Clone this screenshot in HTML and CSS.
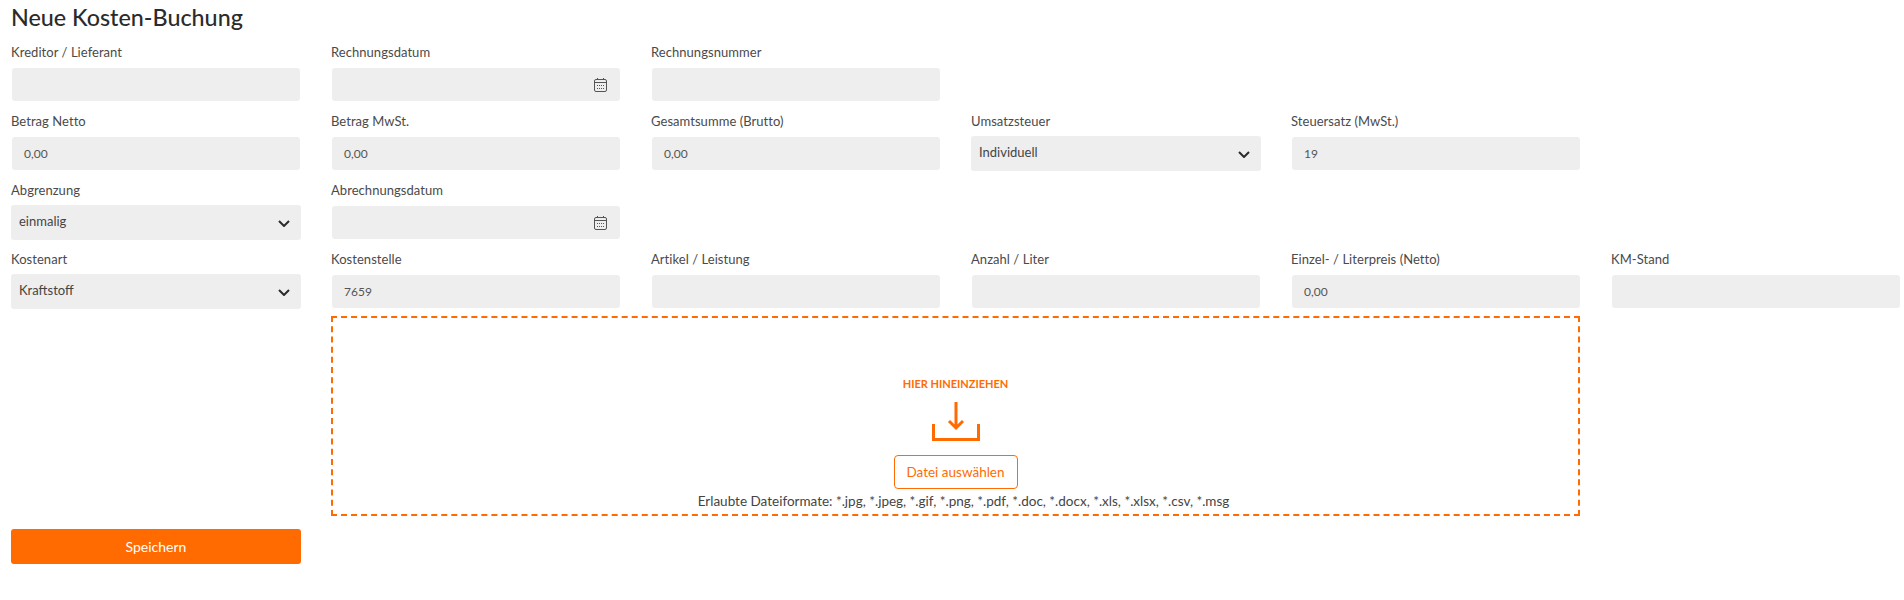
FILE: index.html
```html
<!DOCTYPE html>
<html lang="de">
<head>
<meta charset="utf-8">
<title>Neue Kosten-Buchung</title>
<link rel="stylesheet" href="styles.css">
</head>
<body>
<main class="page">
<h1 class="title">Neue Kosten-Buchung</h1>
<form class="grid">
  <div class="field"><label>Kreditor / Lieferant</label><div class="input"></div></div>
  <div class="field"><label>Rechnungsdatum</label><div class="input date"><svg class="cal" viewBox="0 0 13 14"><use href="#cal"/></svg></div></div>
  <div class="field"><label>Rechnungsnummer</label><div class="input"></div></div>
  <div class="field"></div><div class="field"></div><div class="field"></div>

  <div class="field"><label>Betrag Netto</label><div class="input">0,00</div></div>
  <div class="field"><label>Betrag MwSt.</label><div class="input">0,00</div></div>
  <div class="field"><label>Gesamtsumme (Brutto)</label><div class="input">0,00</div></div>
  <div class="field"><label>Umsatzsteuer</label><div class="select">Individuell<svg class="chev" viewBox="0 0 12 7"><use href="#chev"/></svg></div></div>
  <div class="field"><label>Steuersatz (MwSt.)</label><div class="input">19</div></div>
  <div class="field"></div>

  <div class="field"><label>Abgrenzung</label><div class="select">einmalig<svg class="chev" viewBox="0 0 12 7"><use href="#chev"/></svg></div></div>
  <div class="field"><label>Abrechnungsdatum</label><div class="input date"><svg class="cal" viewBox="0 0 13 14"><use href="#cal"/></svg></div></div>
  <div class="field"></div><div class="field"></div><div class="field"></div><div class="field"></div>

  <div class="field"><label>Kostenart</label><div class="select">Kraftstoff<svg class="chev" viewBox="0 0 12 7"><use href="#chev"/></svg></div></div>
  <div class="field"><label>Kostenstelle</label><div class="input">7659</div></div>
  <div class="field"><label>Artikel / Leistung</label><div class="input"></div></div>
  <div class="field"><label>Anzahl / Liter</label><div class="input"></div></div>
  <div class="field"><label>Einzel- / Literpreis (Netto)</label><div class="input">0,00</div></div>
  <div class="field"><label>KM-Stand</label><div class="input"></div></div>
</form>
<section class="lower">
  <div class="drop">
    <div class="drop-title">HIER HINEINZIEHEN</div>
    <svg class="drop-icon" viewBox="0 0 48 39"><path d="M24 0V26M17 19L24 26L31 19M1.500 22V37.500H46.500V22" fill="none" stroke="#ff6b00" stroke-width="3"/></svg>
    <button class="pick" type="button">Datei auswählen</button>
    <div class="formats">Erlaubte Dateiformate: *.jpg, *.jpeg, *.gif, *.png, *.pdf, *.doc, *.docx, *.xls, *.xlsx, *.csv, *.msg</div>
  </div>
  <button class="save" type="button">Speichern</button>
</section>
</main>
<svg class="defs" width="0" height="0">
  <symbol id="cal" viewBox="0 0 13 14"><rect x="0.500" y="1.500" width="12" height="12" rx="1.500" fill="none" stroke="#555"/><path d="M0.500 4.500H12.500M3.500 0V2M9.500 0V2" fill="none" stroke="#555"/><path d="M3 7.500H10M3 10.500H10" fill="none" stroke="#555" stroke-dasharray="1 1"/></symbol>
  <symbol id="chev" viewBox="0 0 12 7"><path d="M1 1L6 6L11 1" fill="none" stroke="#2b2b2b" stroke-width="2"/></symbol>
</svg>
</body>
</html>
```
FILE: styles.css
```css
* { box-sizing: border-box; }
html, body { margin: 0; background: #fff; }
body { font-family: "Lato", "Liberation Sans", sans-serif; color: #3a3a3a; }
.page { padding: 0 4px 0 11px; }
.title { margin: 0; height: 36px; font-size: 23.300px; line-height: 34px; font-weight: 500; color: #2b2b2b; }
.grid { display: grid; grid-template-columns: repeat(6, 290px); column-gap: 30px; }
.field { height: 69px; display: flex; flex-direction: column; }
.field label { font-size: 13px; line-height: 16px; padding-top: 8px; height: 32px; color: #4a4a4a; letter-spacing: 0.05px; }
.input, .select { background: #eee; border-radius: 3px; display: flex; align-items: center; }
.input { height: 33px; margin: 0 1px; padding: 0 13px 0 12px; font-size: 12px; color: #555; }
.select { height: 35px; margin-top: -1px; padding: 0 9px 4px 8px; font-size: 13px; color: #444; position: relative; }
.cal { width: 13px; height: 14px; margin-left: auto; }
.chev { width: 12px; height: 7px; position: absolute; right: 11px; top: 15px; }
.lower { display: grid; grid-template-columns: 290px 1249px; column-gap: 30px; row-gap: 13px; margin-top: 4px; }
.drop { grid-column: 2; grid-row: 1; height: 200px; border: 2px dashed #ff6b00; display: flex; flex-direction: column; align-items: center; justify-content: flex-end; }
.save { grid-column: 1; grid-row: 2; width: 290px; height: 35px; border: 0; border-radius: 3px; background: #ff6b00; color: #fff; font: inherit; font-size: 14px; }
.drop-title { font-size: 11px; font-weight: 700; color: #ff6b00; margin-bottom: 11px; line-height: 14px; }
.drop-icon { width: 48px; height: 39px; display: block; }
.pick { height: 34px; width: 124px; margin-top: 14px; border: 1px solid #ff6b00; border-radius: 4px; background: #fff; color: #ff6b00; font: inherit; font-size: 13.500px; }
.formats { font-size: 13.500px; line-height: 16px; color: #444; margin-top: 4px; margin-bottom: 5px; margin-left: 16px; }
.defs { position: absolute; }
```
